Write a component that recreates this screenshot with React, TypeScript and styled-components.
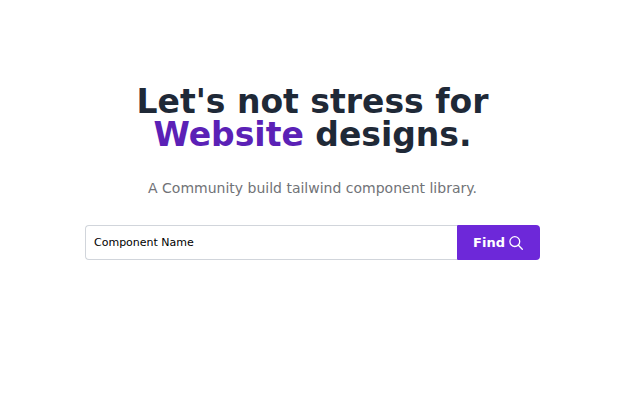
import React from "react";
import styled, { createGlobalStyle } from "styled-components";

const GlobalStyle = createGlobalStyle`
  *, *::before, *::after { box-sizing: border-box; }
  body { margin: 0; background: #fff; font-family: "DejaVu Sans", sans-serif; }
`;

const Hero = styled.main`
  display: flex;
  flex-direction: column;
  align-items: center;
  padding: 85px 32px;
`;

const Title = styled.h1`
  margin: 0;
  max-width: 456px;
  color: #1f2937;
  font-size: 33px;
  font-weight: 700;
  line-height: 33px;
  text-align: center;
`;

const Accent = styled.span`
  color: #5b21b6;
`;

const Lead = styled.p`
  margin: 24px 0;
  color: #717377;
  font-size: 14px;
  line-height: 26px;
  text-align: center;
`;

const SearchForm = styled.form`
  display: flex;
  width: 100%;
  max-width: 455px;
  height: 35px;
`;

const SearchInput = styled.input`
  flex: 1;
  min-width: 0;
  padding: 0 8px;
  border: 1px solid #d1d5db;
  border-right: 0;
  border-radius: 4px 0 0 4px;
  background: #fff;
  color: #000;
  font: 11px "DejaVu Sans", sans-serif;
  outline: none;

  &::placeholder { color: #000; opacity: 1; }
`;

const FindButton = styled.button`
  display: flex;
  align-items: center;
  gap: 4px;
  padding: 0 17px 0 16px;
  border: 0;
  border-radius: 1px 4px 4px 1px;
  background: #6d28d9;
  color: #fff;
  font: 700 13px "DejaVu Sans", sans-serif;
  cursor: pointer;
`;

const SearchIcon = () => (
  <svg width="14" height="14" viewBox="0 0 14 14" fill="none" stroke="currentColor" strokeWidth="1.3" strokeLinecap="round" aria-hidden="true">
    <circle cx="5.8" cy="5.6" r="4.9" />
    <path d="M9.4 9.2 13.3 13.2" />
  </svg>
);

export default function App() {
  return (
    <>
      <GlobalStyle />
      <Hero>
        <Title>
          Let's not stress for <Accent>Website</Accent> designs.
        </Title>
        <Lead>A Community build tailwind component library.</Lead>
        <SearchForm onSubmit={(event) => event.preventDefault()}>
          <SearchInput type="text" aria-label="Component Name" placeholder="Component Name" />
          <FindButton type="submit">
            Find
            <SearchIcon />
          </FindButton>
        </SearchForm>
      </Hero>
    </>
  );
}
